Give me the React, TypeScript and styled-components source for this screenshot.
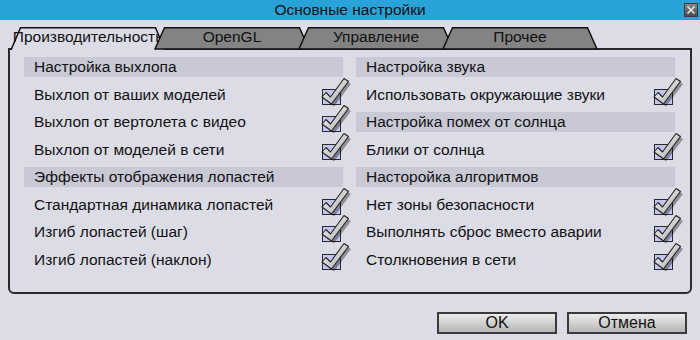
import React from 'react';
import styled, { createGlobalStyle } from 'styled-components';

const GlobalStyle = createGlobalStyle`
  html, body {
    margin: 0;
    padding: 0;
    background: #dcdce7;
  }
  body {
    font-family: "Liberation Sans", Arial, sans-serif;
    color: #111;
  }
`;

const Window = styled.div`
  width: 700px;
  height: 340px;
  display: flex;
  flex-direction: column;
  background: #dcdce7;
  overflow: hidden;
`;

const TitleBar = styled.div`
  height: 20px;
  background: #29a3d7;
  display: grid;
  grid-template-columns: 1fr auto 1fr;
  align-items: center;
  font-size: 15.5px;
  line-height: 20px;
`;

const Title = styled.div`
  grid-column: 2;
  white-space: nowrap;
`;

const CloseButton = styled.div`
  grid-column: 3;
  justify-self: end;
  margin-right: 2px;
  width: 14px;
  height: 14px;
  box-sizing: border-box;
  border: 1px solid #3a3a3a;
  background: linear-gradient(#8a8a8a, #4a4a4a);
  display: flex;
  align-items: center;
  justify-content: center;
`;

const Body = styled.div`
  flex: 1;
  display: flex;
  flex-direction: column;
  padding: 7px 8px 0 8px;
`;

const TabRow = styled.div`
  position: relative;
  z-index: 1;
  height: 23px;
  display: flex;
  padding-left: 2px;
`;

const Tab = styled.div<{ $active?: boolean }>`
  position: relative;
  width: 156px;
  height: 23px;
  flex: none;
  margin-left: ${(p) => (p.$active ? '0' : '-12px')};
  font-size: 15.5px;
  line-height: 20px;
  display: flex;
  justify-content: center;
  white-space: nowrap;

  svg {
    position: absolute;
    left: 0;
    top: 0;
  }

  span {
    position: relative;
  }
`;

const Panel = styled.div`
  margin-top: -2px;
  height: 246px;
  box-sizing: border-box;
  border: 2px solid #2a2a2a;
  border-radius: 0 0 6px 6px;
  padding: 7px 15px 0 14px;
  display: grid;
  grid-template-columns: 1fr 1fr;
  column-gap: 13px;
  align-items: start;
`;

const Column = styled.div`
  display: flex;
  flex-direction: column;
  gap: 7.5px;
`;

const SectionHeader = styled.div`
  height: 20px;
  line-height: 20px;
  background: #c9c9d6;
  padding-left: 10px;
  font-size: 15.5px;
  white-space: nowrap;
`;

const OptionRow = styled.div`
  height: 20px;
  display: flex;
  align-items: flex-end;
  justify-content: space-between;
  padding: 0 2px 0 10px;
  font-size: 15.5px;
  white-space: nowrap;

  span {
    align-self: center;
  }
`;

const Box = styled.div`
  position: relative;
  width: 19px;
  height: 16px;
  box-sizing: border-box;
  border: 1px solid #2a2a2a;
  background: #c4c4f0;

  svg {
    position: absolute;
    left: -3px;
    top: -12px;
  }
`;

const Footer = styled.div`
  display: flex;
  justify-content: flex-end;
  gap: 10px;
  padding: 18px 5px 0 0;
`;

const Button = styled.button`
  width: 120px;
  height: 22px;
  box-sizing: border-box;
  border: 2px solid #3a3a3a;
  background: linear-gradient(#ececec, #b6b6b6);
  font-family: "Liberation Sans", Arial, sans-serif;
  font-size: 16px;
  line-height: 18px;
  color: #111;
  padding: 0;
`;

const TabShape = ({ active }: { active?: boolean }) => (
  <svg width="156" height="23" viewBox="0 0 156 23">
    {active ? (
      <>
        <path d="M1 23 L10.5 0.75 L145.5 0.75 L155 23 Z" fill="#dcdce7" />
        <path d="M1 23 L10.5 0.75 L145.5 0.75 L155 23" fill="none" stroke="#111" strokeWidth="1.5" />
      </>
    ) : (
      <path d="M1 22 L10.5 0.75 L145.5 0.75 L155 22 Z" fill="#838383" stroke="#111" strokeWidth="1.5" />
    )}
  </svg>
);

const CheckMark = () => (
  <svg width="32" height="30" viewBox="0 0 32 30">
    <defs>
      <linearGradient id="chk" x1="0" y1="0" x2="1" y2="1">
        <stop offset="0" stopColor="#ffffff" />
        <stop offset="1" stopColor="#a4a4a4" />
      </linearGradient>
    </defs>
    <path d="M3 20 L7 15.5 L11.5 20 L25 1.5 L29.5 4.5 L12.5 27 Z" fill="rgba(0,0,0,0.35)" transform="translate(1.5 1.5)" />
    <path d="M2 19 L6 14.5 L10.5 19 L24 0.5 L28.5 3.5 L11.5 26 Z" fill="url(#chk)" stroke="#222" strokeWidth="1.1" strokeLinejoin="round" />
  </svg>
);

type Item = { header?: string; label?: string };

const left: Item[] = [
  { header: 'Настройка выхлопа' },
  { label: 'Выхлоп от ваших моделей' },
  { label: 'Выхлоп от вертолета с видео' },
  { label: 'Выхлоп от моделей в сети' },
  { header: 'Эффекты отображения лопастей' },
  { label: 'Стандартная динамика лопастей' },
  { label: 'Изгиб лопастей (шаг)' },
  { label: 'Изгиб лопастей (наклон)' },
];

const right: Item[] = [
  { header: 'Настройка звука' },
  { label: 'Использовать окружающие звуки' },
  { header: 'Настройка помех от солнца' },
  { label: 'Блики от солнца' },
  { header: 'Насторойка алгоритмов' },
  { label: 'Нет зоны безопасности' },
  { label: 'Выполнять сброс вместо аварии' },
  { label: 'Столкновения в сети' },
];

const tabs = ['Производительность', 'OpenGL', 'Управление', 'Прочее'];

const renderColumn = (items: Item[]) => (
  <Column>
    {items.map((it, i) =>
      it.header ? (
        <SectionHeader key={i}>{it.header}</SectionHeader>
      ) : (
        <OptionRow key={i}>
          <span>{it.label}</span>
          <Box>
            <CheckMark />
          </Box>
        </OptionRow>
      )
    )}
  </Column>
);

export default function App() {
  return (
    <>
      <GlobalStyle />
      <Window>
        <TitleBar>
          <Title>Основные настройки</Title>
          <CloseButton>
            <svg width="10" height="10" viewBox="0 0 10 10">
              <path d="M1.5 1.5 L8.5 8.5 M8.5 1.5 L1.5 8.5" stroke="#e4e4e4" strokeWidth="1.6" />
            </svg>
          </CloseButton>
        </TitleBar>
        <Body>
          <TabRow>
            {tabs.map((t, i) => (
              <Tab key={t} $active={i === 0}>
                <TabShape active={i === 0} />
                <span>{t}</span>
              </Tab>
            ))}
          </TabRow>
          <Panel>
            {renderColumn(left)}
            {renderColumn(right)}
          </Panel>
          <Footer>
            <Button>OK</Button>
            <Button>Отмена</Button>
          </Footer>
        </Body>
      </Window>
    </>
  );
}
